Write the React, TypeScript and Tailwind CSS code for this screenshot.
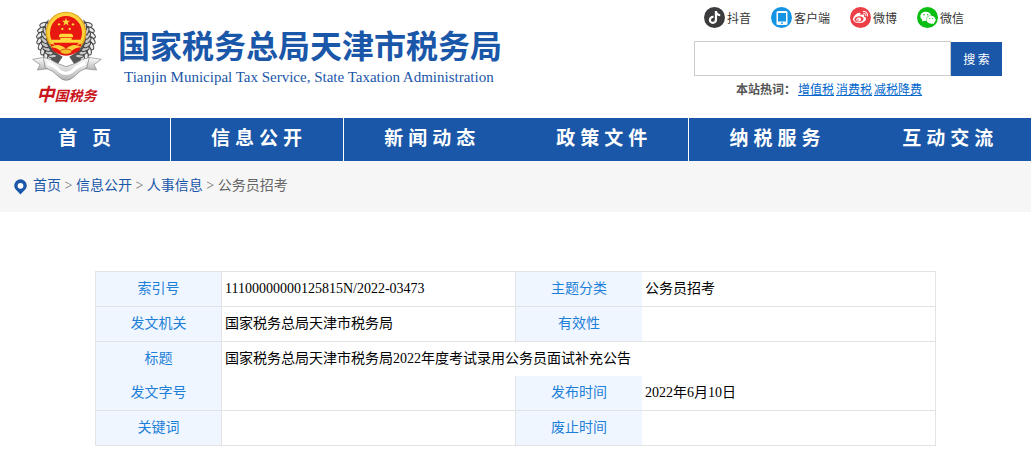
import type { ReactNode } from "react";
import { FaTiktok, FaWeibo, FaWeixin } from "react-icons/fa6";

const navItems = ["首 页", "信息公开", "新闻动态", "政策文件", "纳税服务", "互动交流"];
const dividers = [true, true, false, true, false, false];

const crumbs = ["首页", "信息公开", "人事信息"];
const hotWords = ["增值税", "消费税", "减税降费"];

const socials = [
  { name: "抖音", color: "bg-[#3b3b3d]", icon: <FaTiktok className="size-[13px]" /> },
  { name: "客户端", color: "bg-[#1594e4]", icon: <TabletIcon /> },
  { name: "微博", color: "bg-[#ec3f47]", icon: <FaWeibo className="size-[15px]" /> },
  { name: "微信", color: "bg-[#0abf12]", icon: <FaWeixin className="size-4" /> },
];

function TabletIcon() {
  return (
    <svg viewBox="0 0 14 14" className="size-3.5" aria-hidden="true">
      <rect x="1.5" y="0" width="11" height="14" rx="1.5" fill="#fff" />
      <rect x="3" y="2" width="8" height="8.5" fill="#1594e4" />
      <circle cx="7" cy="12.2" r="0.9" fill="#1594e4" />
    </svg>
  );
}

const leaves = [-142, -130, -118, -106, -94, -82, -70, -58];

function Wreath() {
  return (
    <g>
      <path d="M86 58 Q52 90 56 130 Q62 176 108 200 L128 170 Q88 150 82 110 Z" fill="#555" />
      {leaves.map((angle) => (
        <g key={angle} transform={`rotate(${angle} 138 116)`}>
          <ellipse cx="138" cy="37" rx="12" ry="6" transform="rotate(38 138 37)" fill="#ececec" stroke="#444" strokeWidth="3" />
          <ellipse cx="138" cy="50" rx="12" ry="6" transform="rotate(-38 138 50)" fill="#c8c8c8" stroke="#444" strokeWidth="3" />
        </g>
      ))}
    </g>
  );
}

function Emblem() {
  return (
    <svg viewBox="30 30 219 219" className="size-[73px]" aria-hidden="true">
      <defs>
        <linearGradient id="ribbon" x1="0" y1="0" x2="0" y2="1">
          <stop offset="0" stopColor="#fff" />
          <stop offset="1" stopColor="#b5b5b5" />
        </linearGradient>
      </defs>
      <Wreath />
      <g transform="translate(276 0) scale(-1 1)">
        <Wreath />
      </g>
      <path d="M38 178 L72 172 L84 206 L52 210 L60 194 Z" fill="url(#ribbon)" stroke="#888" strokeWidth="2" />
      <path d="M244 178 L206 172 L194 206 L230 210 L222 194 Z" fill="url(#ribbon)" stroke="#888" strokeWidth="2" />
      <path d="M70 172 Q92 176 112 190 L138 200 L166 190 Q186 176 208 172 L200 204 Q180 210 162 230 Q138 252 116 230 Q98 210 76 204 Z" fill="url(#ribbon)" stroke="#777" strokeWidth="2" />
      <path d="M82 190 Q104 196 120 214 Q138 226 156 214 Q174 196 196 190" fill="none" stroke="#fff" strokeWidth="10" />
      <ellipse cx="138" cy="98" rx="61" ry="63" fill="#dfa11c" />
      <ellipse cx="138" cy="97" rx="57" ry="59" fill="#fbd23c" />
      <ellipse cx="138" cy="98" rx="48" ry="50" fill="#e8170f" />
      <path d="M138 53 L141 62 L150 62 L143 68 L146 77 L138 71 L130 77 L133 68 L126 62 L135 62 Z" fill="#ffd83b" />
      <g fill="#ffd83b">
        <circle cx="117" cy="73" r="3.5" />
        <circle cx="159" cy="73" r="3.5" />
        <circle cx="127" cy="87" r="3.5" />
        <circle cx="149" cy="87" r="3.5" />
        <path d="M117 106 L122 101 H154 L159 106 V112 H117 Z" />
        <path d="M121 114 H155 V119 H182 L179 128 H97 L94 119 H121 Z" />
      </g>
      <path d="M92 132 L112 136 Q138 126 164 136 L184 132 L178 152 L160 162 Q138 172 116 162 L98 152 Z" fill="#e8170f" />
      <path d="M92 142 Q114 126 138 146 Q162 126 184 142 Q166 142 154 154 Q138 146 122 154 Q110 142 92 142 Z" fill="#fbd23c" />
      <ellipse cx="138" cy="155" rx="17" ry="8" fill="#f6bd2b" stroke="#c8140d" strokeWidth="2" />
    </svg>
  );
}

function Label({ children, border = "border-b border-r" }: { children: ReactNode; border?: string }) {
  return (
    <th scope="row" className={`${border} border-[#e3e3e3] bg-[#eff6ff] font-normal text-[#1e7fd8]`}>
      {children}
    </th>
  );
}

function Value({ children, span, border = "border-b border-r" }: { children?: ReactNode; span?: number; border?: string }) {
  return (
    <td colSpan={span} className={`${border} border-[#e3e3e3] pl-[3px]`}>
      {children}
    </td>
  );
}

export default function App() {
  return (
    <div className="min-h-screen bg-white font-['Liberation_Serif','Noto_Sans_CJK_SC',serif] text-sm text-black">
      <header className="flex h-[118px] justify-between pr-[29px] pl-[30px]">
        <div className="flex">
          <div className="flex w-[73px] flex-col items-center pt-2.5">
            <Emblem />
            <span className="-mt-1 font-['Noto_Sans_CJK_SC',sans-serif] text-[14px] leading-6 font-bold whitespace-nowrap text-[#c9161d] italic">
              <span className="text-lg">中</span>国税务
            </span>
          </div>
          <div className="ml-[15px] flex flex-col pt-6 text-[#1a57a9]">
            <h1 className="font-['Noto_Sans_CJK_SC',sans-serif] text-[32px] leading-10 font-bold whitespace-nowrap">国家税务总局天津市税务局</h1>
            <p className="pt-px pl-1.5 text-[15px] leading-6 whitespace-nowrap">Tianjin Municipal Tax Service, State Taxation Administration</p>
          </div>
        </div>

        <div className="w-[308px] pt-[7px] font-['Noto_Sans_CJK_SC',sans-serif] text-xs">
          <div className="flex gap-5 pl-2.5 text-[#333]">
            {socials.map((s) => (
              <a key={s.name} href="#" className="flex items-center gap-0.5">
                <span className={`flex size-[21px] items-center justify-center rounded-full text-white ${s.color}`}>{s.icon}</span>
                {s.name}
              </a>
            ))}
          </div>
          <form className="mt-[13px] flex items-end">
            <input type="text" aria-label="搜索" className="h-[35px] min-w-0 flex-1 border border-[#ccc] px-2 outline-none" />
            <button type="button" className="h-[34px] w-[51px] bg-[#1a57a9] text-white">搜 索</button>
          </form>
          <p className="flex gap-0.5 pt-1 pl-[42px] leading-[18px] text-[#0066cc]">
            <strong className="text-[#555]">本站热词：</strong>
            {hotWords.map((word) => (
              <a key={word} href="#" className="underline">{word}</a>
            ))}
          </p>
        </div>
      </header>

      <nav className="flex h-[43px] overflow-hidden bg-[#1a57a9]">
        {navItems.map((item, i) => (
          <a
            key={item}
            href="#"
            className={`flex shrink-0 items-center justify-center pb-0.5 pl-1 text-[19px] font-bold tracking-[5px] whitespace-pre text-white ${i === 0 ? "w-[16.6%]" : "w-[16.75%]"} ${dividers[i] ? "border-r border-white" : ""}`}
          >
            {item}
          </a>
        ))}
      </nav>

      <div className="flex h-[51px] items-center gap-1.5 bg-[#f6f6f6] pl-3.5 text-[#666]">
        <svg viewBox="0 0 13 16" className="h-4 w-[13px]" aria-hidden="true">
          <path d="M6.5 0.3 A6.3 6.3 0 0 0 0.2 6.6 C0.2 10.5 3.5 12 6.5 15.6 C9.5 12 12.8 10.5 12.8 6.6 A6.3 6.3 0 0 0 6.5 0.3 Z" fill="#1a57a9" />
          <circle cx="6.5" cy="6.8" r="2.9" fill="#fff" />
        </svg>
        <p className="pb-0.5">
          {crumbs.map((crumb) => (
            <span key={crumb}>
              <a href="#" className="text-[#1a57a9]">{crumb}</a>
              {" > "}
            </span>
          ))}
          公务员招考
        </p>
      </div>

      <table className="mx-auto mt-[59px] w-[82%] max-w-[841px] table-fixed border-separate border-spacing-0 border-t border-l border-[#e3e3e3]">
        <colgroup>
          <col className="w-[15%]" />
          <col className="w-[35%]" />
          <col className="w-[15%]" />
          <col className="w-[35%]" />
        </colgroup>
        <tbody>
          <tr className="h-[35px]">
            <Label>索引号</Label>
            <Value>11100000000125815N/2022-03473</Value>
            <Label border="border-b">主题分类</Label>
            <Value>公务员招考</Value>
          </tr>
          <tr className="h-[35px]">
            <Label>发文机关</Label>
            <Value>国家税务总局天津市税务局</Value>
            <Label border="border-b">有效性</Label>
            <Value />
          </tr>
          <tr className="h-[34px]">
            <Label border="border-r">标题</Label>
            <Value span={3} border="border-r">国家税务总局天津市税务局2022年度考试录用公务员面试补充公告</Value>
          </tr>
          <tr className="h-[35px]">
            <Label>发文字号</Label>
            <Value />
            <Label border="border-b">发布时间</Label>
            <Value>2022年6月10日</Value>
          </tr>
          <tr className="h-[35px]">
            <Label>关键词</Label>
            <Value />
            <Label border="border-b">废止时间</Label>
            <Value />
          </tr>
        </tbody>
      </table>
    </div>
  );
}
